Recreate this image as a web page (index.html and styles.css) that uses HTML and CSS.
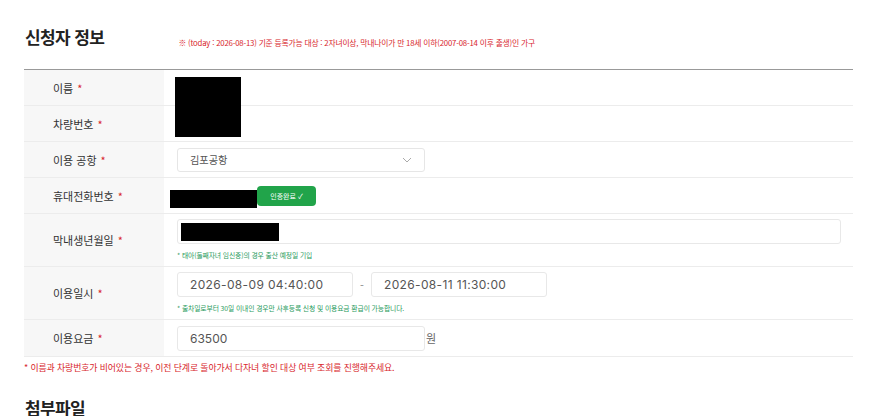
FILE: index.html
```html
<!DOCTYPE html>
<html lang="ko">
<head>
<meta charset="utf-8">
<link rel="stylesheet" href="styles.css">
</head>
<body>
<div class="wrap">
  <div class="head">
    <h2 class="title">신청자 정보</h2>
    <p class="head-note">※ (today : 2026-08-13) 기준 등록가능 대상 : 2자녀이상, 막내나이가 만 18세 이하(2007-08-14 이후 출생)인 가구</p>
  </div>
  <div class="table">
    <div class="redact redact-name"></div>
    <div class="row r36">
      <div class="th">이름 <span class="req">*</span></div>
      <div class="td"></div>
    </div>
    <div class="row r36">
      <div class="th">차량번호 <span class="req">*</span></div>
      <div class="td"></div>
    </div>
    <div class="row r36">
      <div class="th">이용 공항 <span class="req">*</span></div>
      <div class="td">
        <div class="select">
          <span>김포공항</span>
          <svg width="10" height="6" viewBox="0 0 10 6"><path d="M1 1l4 4 4-4" fill="none" stroke="#aaa" stroke-width="1"/></svg>
        </div>
      </div>
    </div>
    <div class="row r36">
      <div class="th">휴대전화번호 <span class="req">*</span></div>
      <div class="td td-phone">
        <span class="black phone-black"></span>
        <span class="btn-ok">인증완료 ✓</span>
      </div>
    </div>
    <div class="row r53">
      <div class="th">막내생년월일 <span class="req">*</span></div>
      <div class="td td-col">
        <div class="input wide"><span class="black birth-black"></span></div>
        <p class="gnote">* 태아(둘째자녀 임신중)의 경우 출산 예정일 기입</p>
      </div>
    </div>
    <div class="row r53">
      <div class="th">이용일시 <span class="req">*</span></div>
      <div class="td td-col">
        <div class="dates">
          <div class="input date">2026-08-09 04:40:00</div>
          <span class="dash">-</span>
          <div class="input date">2026-08-11 11:30:00</div>
        </div>
        <p class="gnote">* 출차일로부터 30일 이내인 경우만 사후등록 신청 및 이용요금 환급이 가능합니다.</p>
      </div>
    </div>
    <div class="row r37">
      <div class="th">이용요금 <span class="req">*</span></div>
      <div class="td">
        <div class="input fee">63500</div>
        <span class="won">원</span>
      </div>
    </div>
  </div>
  <p class="foot-note">* 이름과 차량번호가 비어있는 경우, 이전 단계로 돌아가서 다자녀 할인 대상 여부 조회를 진행해주세요.</p>
  <h2 class="title title2">첨부파일</h2>
</div>
</body>
</html>
```
FILE: styles.css
```css
* { box-sizing: border-box; }
html, body { margin: 0; padding: 0; background: #fff; }
body {
  font-family: "Noto Sans CJK KR", "Noto Sans", "Liberation Sans", sans-serif;
  color: #333;
  overflow: hidden;
  height: 416px;
}
.wrap { width: 853px; padding-left: 24px; }
.head { display: flex; align-items: flex-end; height: 69px; padding-bottom: 21px; }
.title {
  margin: 0 0 0 1px;
  font-size: 17px;
  font-weight: 600;
  color: #222;
  line-height: 22px;
  letter-spacing: -0.6px;
}
.head-note {
  margin: 0 0 0 74px;
  font-size: 7.8px;
  color: #d8262c;
  letter-spacing: -0.2px;
  line-height: 10px;
  white-space: nowrap;
}
.table { position: relative; border-top: 1px solid #999; }
.row { display: flex; border-bottom: 1px solid #ececec; }
.r36 { height: 36px; }
.r37 { height: 37px; }
.r53 { height: 53px; }
.th {
  width: 140px;
  flex: none;
  background: #f7f7f7;
  padding-left: 29px;
  display: flex;
  align-items: center;
  font-size: 11px;
  color: #333;
}
.req { color: #d8262c; margin-left: 4px; }
.td { flex: 1; display: flex; align-items: center; padding-left: 13px; }
.td-col { flex-direction: column; align-items: flex-start; justify-content: flex-start; padding-top: 5px; }
.redact { position: absolute; background: #000; }
.redact-name { left: 151px; top: 7px; width: 66px; height: 60px; }
.select {
  width: 248px; height: 24px;
  border: 1px solid #e6e6e6; border-radius: 3px;
  display: flex; align-items: center; justify-content: space-between;
  padding: 0 12px 0 12px;
  font-size: 10.2px; color: #555;
}
.td-phone { padding-left: 6px; padding-top: 4px; }
.black { display: inline-block; background: #000; }
.phone-black { width: 87px; height: 18px; margin-top: 3px; }
.btn-ok {
  display: inline-flex; align-items: center; justify-content: center;
  width: 59px; height: 20px;
  background: #21a44a; color: #fff;
  border-radius: 4px;
  font-size: 7px;
  margin-top: -3px;
}
.input {
  height: 25px;
  border: 1px solid #e8e8e8; border-radius: 3px;
  display: flex; align-items: center;
  padding-left: 12px;
  font-size: 12px; color: #555;
  font-family: "Inter", "Noto Sans", sans-serif;
}
.wide { width: 664px; padding-left: 3px; }
.birth-black { width: 98px; height: 18px; }
.gnote {
  margin: 6px 0 0 0;
  font-size: 6.8px; color: #1f9a5c;
  line-height: 10px;
  letter-spacing: -0.1px;
  white-space: nowrap;
}
.dates { display: flex; align-items: center; }
.date { width: 176px; letter-spacing: 0.35px; }
.dash { width: 18px; text-align: center; font-size: 11px; color: #888; }
.fee { width: 248px; }
.won { font-size: 11px; color: #666; margin-left: 1px; }
.foot-note {
  margin: 6px 0 0 0;
  font-size: 8.9px; color: #d8262c;
  line-height: 10px;
  letter-spacing: -0.1px;
  white-space: nowrap;
}
.title2 { margin-top: 24px; }
```
